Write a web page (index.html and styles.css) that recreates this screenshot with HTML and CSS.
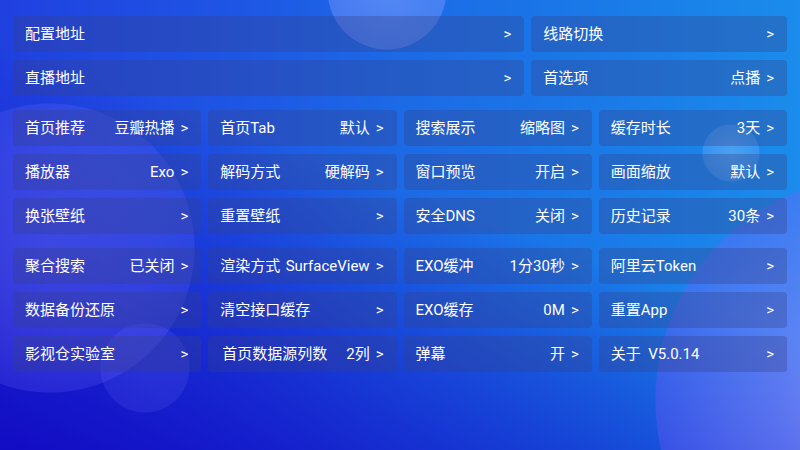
FILE: index.html
```html
<!DOCTYPE html>
<html lang="zh-CN">
<head>
<meta charset="utf-8">
<title>设置</title>
<link rel="stylesheet" href="styles.css">
</head>
<body>
<div class="page">
  <div class="group top">
    <div class="item"><span class="label">配置地址</span><span class="arrow">&gt;</span></div>
    <div class="item"><span class="label">线路切换</span><span class="arrow">&gt;</span></div>
    <div class="item"><span class="label">直播地址</span><span class="arrow">&gt;</span></div>
    <div class="item"><span class="label">首选项</span><span class="value">点播</span><span class="arrow">&gt;</span></div>
  </div>
  <div class="group grid">
    <div class="item"><span class="label">首页推荐</span><span class="value">豆瓣热播</span><span class="arrow">&gt;</span></div>
    <div class="item"><span class="label">首页Tab</span><span class="value">默认</span><span class="arrow">&gt;</span></div>
    <div class="item"><span class="label">搜索展示</span><span class="value">缩略图</span><span class="arrow">&gt;</span></div>
    <div class="item"><span class="label">缓存时长</span><span class="value">3天</span><span class="arrow">&gt;</span></div>
    <div class="item"><span class="label">播放器</span><span class="value">Exo</span><span class="arrow">&gt;</span></div>
    <div class="item"><span class="label">解码方式</span><span class="value">硬解码</span><span class="arrow">&gt;</span></div>
    <div class="item"><span class="label">窗口预览</span><span class="value">开启</span><span class="arrow">&gt;</span></div>
    <div class="item"><span class="label">画面缩放</span><span class="value">默认</span><span class="arrow">&gt;</span></div>
    <div class="item"><span class="label">换张壁纸</span><span class="arrow">&gt;</span></div>
    <div class="item"><span class="label">重置壁纸</span><span class="arrow">&gt;</span></div>
    <div class="item"><span class="label">安全DNS</span><span class="value">关闭</span><span class="arrow">&gt;</span></div>
    <div class="item"><span class="label">历史记录</span><span class="value">30条</span><span class="arrow">&gt;</span></div>
  </div>
  <div class="group grid">
    <div class="item"><span class="label">聚合搜索</span><span class="value">已关闭</span><span class="arrow">&gt;</span></div>
    <div class="item"><span class="label">渲染方式</span><span class="value">SurfaceView</span><span class="arrow">&gt;</span></div>
    <div class="item"><span class="label">EXO缓冲</span><span class="value">1分30秒</span><span class="arrow">&gt;</span></div>
    <div class="item"><span class="label">阿里云Token</span><span class="arrow">&gt;</span></div>
    <div class="item"><span class="label">数据备份还原</span><span class="arrow">&gt;</span></div>
    <div class="item"><span class="label">清空接口缓存</span><span class="arrow">&gt;</span></div>
    <div class="item"><span class="label">EXO缓存</span><span class="value">0M</span><span class="arrow">&gt;</span></div>
    <div class="item"><span class="label">重置App</span><span class="arrow">&gt;</span></div>
    <div class="item"><span class="label">影视仓实验室</span><span class="arrow">&gt;</span></div>
    <div class="item"><span class="label shift">首页数据源列数</span><span class="value">2列</span><span class="arrow">&gt;</span></div>
    <div class="item"><span class="label">弹幕</span><span class="value">开</span><span class="arrow">&gt;</span></div>
    <div class="item"><span class="label">关于&nbsp;&nbsp;V5.0.14</span><span class="arrow">&gt;</span></div>
  </div>
</div>
</body>
</html>
```
FILE: styles.css
```css
html, body {
  margin: 0;
  padding: 0;
  width: 800px;
  height: 450px;
  overflow: hidden;
}

body {
  font-family: Roboto, "Noto Sans CJK SC", "Noto Sans", sans-serif;
  color: #ffffff;
  background:
    radial-gradient(circle 60px at 387px -10px, rgba(130,160,255,0.55) 0, rgba(120,150,255,0.45) 59px, rgba(120,150,255,0) 60px),
    radial-gradient(circle 29px at 731px 153px, rgba(170,210,255,0.35) 0, rgba(140,190,255,0.25) 28px, rgba(140,190,255,0) 29px),
    radial-gradient(circle 45px at 145px 368px, rgba(120,120,255,0.18) 0, rgba(120,120,255,0.15) 44px, rgba(120,120,255,0) 45px),
    radial-gradient(circle 145px at 50px 248px, rgba(135,130,255,0.32) 0, rgba(125,120,255,0.26) 100px, rgba(115,110,255,0.2) 144px, rgba(115,110,255,0) 145px),
    radial-gradient(circle 225px at 880px 400px, rgba(205,150,255,0.55) 0, rgba(175,120,255,0.42) 110px, rgba(140,85,255,0.28) 224px, rgba(140,85,255,0) 225px),
    linear-gradient(20deg, rgba(18,12,196,1) 0%, rgba(18,12,196,0.55) 25%, rgba(18,12,196,0) 55%),
    linear-gradient(90deg, #2040e0 0%, #1e56e4 30%, #1c6ae6 50%, #1a7ae8 75%, #1a8cec 100%);
}

.page {
  padding: 16px 13px;
  display: flex;
  flex-direction: column;
  gap: 14px;
}

.group {
  display: grid;
  column-gap: 7px;
  row-gap: 8px;
}

.top {
  grid-template-columns: 2fr 1fr;
}

.grid {
  grid-template-columns: repeat(4, 1fr);
}

.item {
  height: 36px;
  display: flex;
  align-items: center;
  padding: 0 13px 0 12px;
  border-radius: 4px;
  background: rgba(55, 65, 135, 0.33);
  font-size: 15px;
  line-height: 20px;
  white-space: nowrap;
  min-width: 0;
}

.label {
  flex: 1;
}

.label.shift {
  padding-left: 2px;
}

.value {
  margin-left: 4px;
}

.arrow {
  margin-left: 6px;
}
```
